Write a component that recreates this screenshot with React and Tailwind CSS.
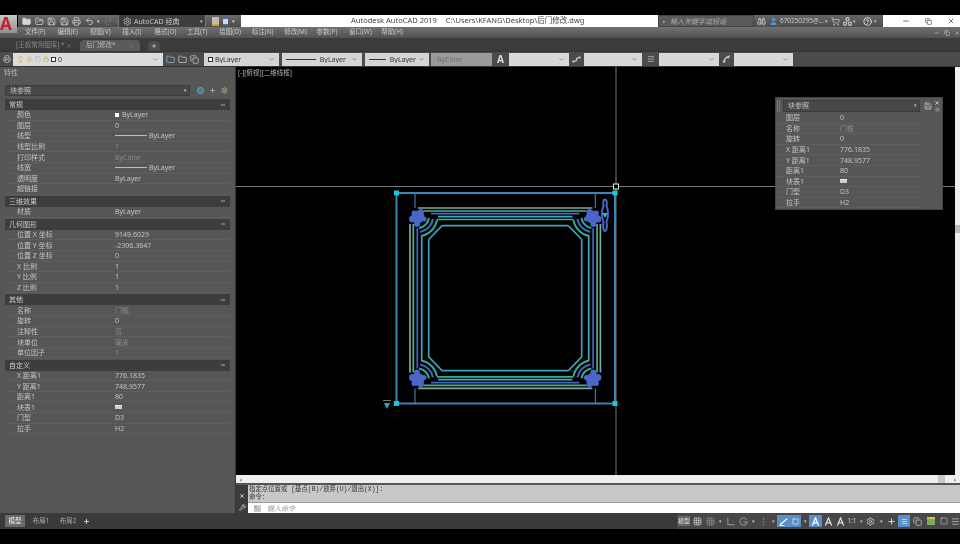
import React from 'react';
import { Folder, FolderOpen, Save, Printer, Undo2, Redo2, Settings, Lightbulb, Sun, Lock, ChevronDown, X, Minus, Square, Copy, Binoculars, User, ShoppingCart, HelpCircle, Wrench, Plus, Grid3x3, Menu } from 'lucide-react';

const menus = ['文件(F)', '编辑(E)', '视图(V)', '插入(I)', '格式(O)', '工具(T)', '绘图(D)', '标注(N)', '修改(M)', '参数(P)', '窗口(W)', '帮助(H)'];

const sections = [
  { title: '常规', rows: [['颜色', 'color'], ['图层', '0'], ['线型', 'line'], ['线型比例', '1', 1], ['打印样式', 'ByColor', 1], ['线宽', 'line'], ['透明度', 'ByLayer'], ['超链接', '']] },
  { title: '三维效果', rows: [['材质', 'ByLayer']] },
  { title: '几何图形', rows: [['位置 X 坐标', '9149.6029'], ['位置 Y 坐标', '-2306.3647'], ['位置 Z 坐标', '0'], ['X 比例', '1'], ['Y 比例', '1'], ['Z 比例', '1']] },
  { title: '其他', rows: [['名称', '门框', 1], ['旋转', '0'], ['注释性', '否', 1], ['块单位', '毫米', 1], ['单位因子', '1', 1]] },
  { title: '自定义', rows: [['X 距离1', '776.1835'], ['Y 距离1', '748.9577'], ['距离1', '80'], ['块表1', 'table'], ['门型', 'D3'], ['拉手', 'H2']] },
];

const floatRows = [['图层', '0'], ['名称', '门框', 1], ['旋转', '0'], ['X 距离1', '776.1835'], ['Y 距离1', '748.9577'], ['距离1', '80'], ['块表1', 'table'], ['门型', 'D3'], ['拉手', 'H2']];

// door frame bands: [top y, start x of the top line, colour]
const topBands = [
  [208, 418, '#7fa89f'],
  [211, 424, '#4bb08c'],
  [213.7, 431, '#4b62c4'],
  [216.7, 438, '#3fa8b8'],
  [219.5, 437, '#30b08c'],
  [225.7, 442, '#3fa0b8'],
];
// [left x, start y of the left line, colour]
const sideBands = [
  [410, 224, '#7fa89f'],
  [413.3, 224, '#4bb08c'],
  [417.3, 228, '#4b62c4'],
  [421.7, 236, '#3fa8b8'],
  [428.7, 239.5, '#3fa0b8'],
];
const frameW = 1010.4;
const frameH = 596.4;

const Value = ({ v, dim }) => {
  if (v === 'color') return <span className="flex items-center gap-[3px]"><span className="w-1 h-1 bg-white" />ByLayer</span>;
  if (v === 'line') return <span className="flex items-center gap-0.5"><span className="w-8 h-px bg-[#bbb]" />ByLayer</span>;
  if (v === 'table') return <span className="block w-[7px] h-1 bg-[#ccc] border-t border-[#eee]" />;
  return <span className={dim ? 'text-[#8c8c8c]' : ''}>{v}</span>;
};

const Combo = ({ className, children }) => (
  <div className={`flex items-center justify-between px-1 h-[13px] text-[7px] text-[#333] ${className}`}>
    <span className="flex items-center gap-0.5 truncate">{children}</span>
    <ChevronDown size={7} strokeWidth={2} className="text-[#666] shrink-0" />
  </div>
);

const Corner = () => (
  <g fill="none">
    <path d="M442 225.700L428.700 239.500" stroke="#3fa0b8" strokeWidth="1.700" />
    <path d="M429 218A12 12 0 0 1 419 228" stroke="#30b08c" strokeWidth="2" />
    <path d="M433 219A16 16 0 0 1 420 232" stroke="#4b62c4" strokeWidth="2" />
    <path d="M437 220A20 20 0 0 1 421 236" stroke="#30b08c" strokeWidth="2" />
    <path d="M415 193V208" stroke="#4a66a8" strokeWidth="1.300" />
    <g fill="#4a66c8">
      <circle cx="418" cy="217" r="6.500" />
      <circle cx="412.500" cy="219" r="3.500" />
      <circle cx="421" cy="212" r="3" />
      <circle cx="424" cy="219" r="2.500" />
      <circle cx="417" cy="224" r="3" />
      <circle cx="414" cy="213" r="2.500" />
    </g>
  </g>
);

const Grip = ({ x, y }) => <rect x={x - 2.5} y={y - 2.5} width="5" height="5" fill="#19c8e0" />;

const Drawing = () => (
  <svg viewBox="236 67 719 408" className="w-full h-full block">
    <path d="M236 186.500H955M616 67V475" stroke="#7a7a7a" strokeWidth="1" fill="none" />
    <g fill="none" strokeWidth="1.700">
      {topBands.map(([y, x, c]) => (
        <path key={y} stroke={c} d={`M${x} ${y}H${frameW - x}M${x} ${frameH - y}H${frameW - x}`} />
      ))}
      {sideBands.map(([x, y, c]) => (
        <path key={x} stroke={c} d={`M${x} ${y}V${frameH - y}M${frameW - x} ${y}V${frameH - y}`} />
      ))}
    </g>
    <Corner />
    <g transform="translate(1010.400 0) scale(-1 1)"><Corner /></g>
    <g transform="translate(0 596.400) scale(1 -1)"><Corner /></g>
    <g transform="translate(1010.400 596.400) scale(-1 -1)"><Corner /></g>
    <rect x="396.500" y="193" width="218.500" height="210.500" fill="none" stroke="#3a86b4" strokeWidth="2" />
    <Grip x={396.500} y={193} />
    <Grip x={615} y={193} />
    <Grip x={396.500} y={403.500} />
    <Grip x={615} y={403.500} />
    <rect x="613.500" y="184" width="5" height="5" fill="#000" stroke="#eee" strokeWidth="1" />
    <path d="M384 403H390L387 409Z" fill="#2fa8b0" />
    <path d="M383 400.500H391" stroke="#6a7a7a" strokeWidth="1" />
    <path d="M605 199.500C607 199.500 607 203 606.500 206C608.500 210 608.500 217 606.500 222C607.500 226 606.500 231 605 231C603.500 231 602.500 226 603.500 222C601.500 217 601.500 210 603.500 206C603 203 603 199.500 605 199.500Z" fill="none" stroke="#4a66c8" strokeWidth="2" />
    <path d="M602.500 213H607.500L605 218Z" fill="#19c8e0" />
  </svg>
);

const Bar = ({ size = 9, icon: Icon, className = '' }) => <Icon size={size} strokeWidth={2} className={`shrink-0 ${className}`} />;

// small drop marker used all over the ribbon bars
const Drop = ({ className = '' }) => <span className={`text-[5px] ${className}`}>▾</span>;

const Slot = ({ w, blue, children }) => (
  <span className={`${w} h-3 shrink-0 flex items-center justify-center ${blue ? 'bg-[#5a8fc8] text-white' : ''}`}>{children}</span>
);

const Glyph = ({ d, className = '' }) => (
  <svg viewBox="0 0 10 10" className={`w-[9px] h-[9px] ${className}`} fill="none" stroke="currentColor" strokeWidth="1.400"><path d={d} /></svg>
);

export default function App() {
  return (
    <div className="w-[960px] h-[544px] bg-black overflow-hidden text-[7px] leading-none blur-[0.4px]" style={{ fontFamily: '"Noto Sans", "Noto Sans CJK SC", sans-serif' }}>
      <div className="h-[15px]" />

      {/* title + menu */}
      <div className="relative">
        <div className="absolute left-0 top-0 w-[17px] h-[18px] bg-gradient-to-b from-[#c9c9c9] to-[#8f8f8f] z-10 flex justify-start">
          <span className="block text-[#c8202c] font-bold text-[17px] leading-[17px]">A</span>
        </div>
        <div className="h-3 flex text-[#ddd]">
          <div className="w-[17px]" />
          <div className="w-[100px] ml-px bg-gradient-to-b from-[#6c6c6c] to-[#4c4c4c] flex items-center gap-[3.500px] pl-1 text-[#d4d4d4]">
            <Bar icon={Folder} className="fill-current" />
            <Bar icon={FolderOpen} />
            <Bar icon={Save} />
            <Bar icon={Save} />
            <Bar icon={Printer} />
            <Bar icon={Undo2} />
            <Drop />
            <Bar icon={Redo2} className="text-[#777]" />
            <Drop className="text-[#777]" />
          </div>
          <div className="w-[88px] bg-[#3f3f3f] flex items-center pl-1 gap-0.5 border-x border-[#777] text-[#c8c8c8]">
            <Bar icon={Settings} />
            <span>AutoCAD 经典</span>
            <Drop className="ml-auto mr-0.5" />
          </div>
          <div className="w-[35px] bg-gradient-to-b from-[#6c6c6c] to-[#4c4c4c] flex items-center gap-1 pl-1.5 text-[#ddd]">
            <span className="w-[7px] h-[9px] bg-[#bbb] border-b-2 border-[#d9a030]" />
            <span className="w-[5px] h-[9px] bg-[#cfd8e0] border-y-2 border-[#3a70b0]" />
            <Drop />
          </div>
          <div className="w-[417px] bg-white flex items-center text-[#444] text-[7.500px] pl-[110px] gap-[9px] whitespace-nowrap">
            <span>Autodesk AutoCAD 2019</span>
            <span>C:\Users\KFANG\Desktop\后门修改.dwg</span>
          </div>
          <div className="w-[96px] bg-[#5a5a5a] border border-[#444] flex items-center text-[#aaa] italic pl-2 gap-1">
            <span className="text-[5px] not-italic -ml-1">▸</span>输入关键字或短语
          </div>
          <div className="w-[129px] bg-gradient-to-b from-[#666] to-[#4c4c4c] flex items-center pl-[3px] text-[#c8c8c8]">
            <Bar icon={Binoculars} className="mr-[3px]" />
            <Bar icon={User} className="text-[#5b8fd0] mr-0.5 fill-current" />
            <span className="whitespace-nowrap text-[6.400px]">670250295@...</span>
            <Drop className="ml-px mr-[3px]" />
            <Bar icon={ShoppingCart} className="mr-[3px]" />
            <svg viewBox="0 0 10 10" className="w-[9px] h-[9px] shrink-0" fill="none" stroke="currentColor" strokeWidth="1.300"><circle cx="5" cy="2.500" r="1.800" /><circle cx="2.200" cy="7.500" r="1.800" /><circle cx="7.800" cy="7.500" r="1.800" /></svg>
            <Drop className="ml-px mr-[7px]" />
            <Bar icon={HelpCircle} className="text-white" />
            <Drop className="ml-0.5" />
          </div>
          <div className="flex-1 bg-white flex items-center pl-[19px] gap-[15px] text-[#333]">
            <Minus size={8} />
            <Copy size={7} />
            <X size={8} />
          </div>
        </div>
        <div className="h-[11px] bg-gradient-to-b from-[#717171] to-[#515151] flex items-center text-[#c9c9c9] relative">
          <div className="w-[25px]" />
          {menus.map((m) => <span key={m} className="w-[32.400px] shrink-0 text-[6.500px]">{m}</span>)}
          <div className="ml-auto flex items-center gap-[4px] text-[#ccc]">
            <Minus size={6} /><Copy size={6} /><X size={6} />
          </div>
        </div>
      </div>

      {/* file tabs */}
      <div className="h-[13px] bg-[#3b3b3b] flex items-end pl-2 text-[6.500px] whitespace-nowrap">
        <div className="w-[72px] h-[11px] flex items-center justify-between px-2 text-[#888]"><span>[王叔常用图库] *</span><X size={6} /></div>
        <div className="w-[60px] h-[11px] bg-[#5a5a5a] rounded-t-sm flex items-center justify-between px-1.5 text-[#bbb]"><span>后门修改*</span><X size={6} className="text-[#777]" /></div>
        <div className="ml-2 w-[12px] h-[10px] bg-[#4c4c4c] rounded-t-sm flex items-center justify-center text-[#ccc]"><Plus size={6} strokeWidth={3} /></div>
      </div>

      {/* layer toolbar */}
      <div className="h-[15px] bg-[#4b4b4b] flex items-center border-t border-[#333] text-[#333]">
        <div className="w-[13px] flex justify-center text-[#ccc]"><Bar icon={Printer} size={8} /></div>
        <Combo className="w-[150px] bg-[#dcdcdc]">
          <Lightbulb size={7} className="text-[#c9a820]" />
          <Sun size={7} className="text-[#c9a820]" />
          <Square size={6} className="text-[#aaa]" />
          <Lock size={6} className="text-[#c9a820]" />
          <span className="w-[5px] h-[5px] border border-[#333] bg-white" />0
        </Combo>
        <div className="w-[41px] flex gap-[3px] pl-[3px] text-[#c8c8c8]">
          <Bar icon={Folder} className="text-[#9ab8d8]" />
          <Bar icon={Folder} />
          <Bar icon={Copy} />
        </div>
        <Combo className="w-[75px] bg-[#d4d4d4]"><span className="w-[5px] h-[5px] border border-[#333] bg-white" />ByLayer</Combo>
        <Combo className="w-[80px] ml-[3px] bg-[#d4d4d4]"><span className="w-[30px] h-px bg-[#333]" />&nbsp;ByLayer</Combo>
        <Combo className="w-[64px] ml-[3px] bg-[#d4d4d4]"><span className="w-[17px] h-px bg-[#333]" />&nbsp;ByLayer</Combo>
        <div className="w-[61px] h-[13px] ml-0.5 bg-[#9a9a9a] text-[#6e6e6e] flex items-center px-1.5">ByColor</div>
        <div className="w-[17px] text-center text-[#ddd] text-[10px] font-bold">A</div>
        <Combo className="w-[60px] bg-[#d8d8d8]" />
        <div className="w-[15px] flex justify-center text-[#ccc]"><Glyph d="M1 8L5 6L5 4L9 2M1 8V6M9 2V4" /></div>
        <Combo className="w-[58px] bg-[#d8d8d8]" />
        <div className="w-[17px] flex justify-center text-[#ccc]"><Bar icon={Menu} size={8} /></div>
        <Combo className="w-[60px] bg-[#d8d8d8]" />
        <div className="w-[15px] flex justify-center text-[#ccc]"><Glyph d="M2 9C2 5 5 2 9 1M1 7H4M7 1V4" /></div>
        <Combo className="w-[59px] bg-[#d8d8d8]" />
      </div>

      {/* main area */}
      <div className="h-[447px] flex border-t border-[#333]">
        <aside className="w-[236px] shrink-0 bg-[#565656] text-[#c4c4c4] border-r border-[#333]">
          <div className="h-[18px] flex items-start pl-1 pt-[1.500px] text-[#bbb]">特性</div>
          <div className="flex items-center h-[11px] px-[5px]">
            <div className="w-[185px] h-full bg-[#474747] border border-[#3c3c3c] flex items-center justify-between pl-1 pr-0.5">块参照<Drop /></div>
            <div className="flex-1 flex justify-around pl-1 text-[#ccc]">
              <span className="w-[7px] h-[7px] rounded-full bg-[#3d79b8] border border-[#7fb069]" />
              <Plus size={7} />
              <Settings size={7} className="text-[#d0c080]" />
            </div>
          </div>
          <div className="mt-[3px] px-[5px]">
            {sections.map((s) => (
              <section key={s.title} className="mb-[1.200px]">
                <div className="h-[11px] bg-[#3d3d3d] flex items-center justify-between pl-[4px] pr-1 text-[#ccc]">
                  <span>{s.title}</span><Minus size={6} strokeWidth={3} />
                </div>
                {s.rows.map(([k, v, dim]) => (
                  <div key={k} className="h-[10.600px] flex items-center border-b border-[#5e5e5e]">
                    <span className="w-[110px] pl-3">{k}</span>
                    <Value v={v} dim={dim} />
                  </div>
                ))}
              </section>
            ))}
          </div>
        </aside>

        <div className="flex-1 flex flex-col min-w-0">
          <div className="h-[408px] relative flex">
            <main className="flex-1 min-w-0 relative bg-black">
              <span className="absolute left-0.5 top-[3px] text-[#b5b5b5] text-[6.500px]">[-][俯视][二维线框]</span>
              <Drawing />
              <div className="absolute left-[539px] top-[30px] w-[168px] h-[113px] bg-[#565656] border border-[#444] text-[#c4c4c4] flex flex-col">
                <div className="h-[15px] flex items-center pl-px pr-0.5 shrink-0">
                  <span className="w-[3px] h-3 mr-[3px] border-x border-[#777]" />
                  <div className="w-[137px] h-3 bg-[#474747] border border-[#3c3c3c] flex items-center justify-between pl-1 pr-0.5">块参照<Drop /></div>
                  <Save size={8} className="ml-[4px] text-[#ccc]" />
                  <span className="ml-auto flex flex-col items-center gap-px text-[#ddd]">
                    <X size={6} strokeWidth={3} />
                    <Menu size={5} />
                  </span>
                </div>
                {floatRows.map(([k, v, dim]) => (
                  <div key={k} className="h-[10.600px] flex items-center shrink-0 border-b border-[#5e5e5e] mr-5">
                    <span className="w-[64px] pl-[10px]">{k}</span>
                    <Value v={v} dim={dim} />
                  </div>
                ))}
              </div>
            </main>
            <div className="w-[5px] bg-[#efefef] flex flex-col">
              <div className="mt-[158px] h-2 bg-[#bbb]" />
            </div>
          </div>
          <div className="h-[10px] bg-[#efefef] flex items-center justify-between px-1 border-b-2 border-[#555] text-[#333]">
            <span className="text-[7px]">‹</span>
            <span className="ml-auto w-[7px] h-full bg-[#c8c8c8] mr-[9px]" />
            <span className="text-[7px]">›</span>
          </div>
          <div className="flex-1 flex">
            <div className="w-[12px] bg-[#3c3c3c] flex flex-col items-center justify-end text-[#eee] gap-[5px] pb-0.5">
              <X size={6} strokeWidth={3} />
              <Wrench size={7} />
            </div>
            <div className="flex-1 flex flex-col bg-[#c8c8c8]">
              <div className="flex-1 text-[#333] text-[6.400px] leading-[8px] pl-[1px] pt-[1px]" style={{ fontFamily: '"Liberation Mono", "Noto Sans CJK SC", monospace' }}>
                <div>指定点位置或 [基点(B)/放弃(U)/退出(X)]:</div>
                <div>命令:</div>
              </div>
              <div className="h-[11px] bg-white border-t border-[#999] flex items-center gap-1.5 pl-1.5 text-[#999] italic">
                <span className="not-italic w-[7px] h-[7px] bg-[#ccc] text-[5px] text-[#444]">&gt;_</span>键入命令
              </div>
            </div>
          </div>
        </div>
      </div>

      {/* status bar */}
      <div className="h-4 bg-[#3a3a3a] flex items-center text-[#aaa] text-[6.500px]">
        <span className="ml-[5px] w-[20px] h-3 bg-[#6a6a6a] text-[#eee] flex items-center justify-center">模型</span>
        <span className="ml-[6px] w-[20px] text-center">布局1</span>
        <span className="ml-[7px] w-[20px] text-center">布局2</span>
        <span className="ml-[5px] text-[#ddd]"><Plus size={7} strokeWidth={3} /></span>
        <div className="ml-auto w-[283px] h-full flex items-center bg-[#474747] text-[#c4c4c4]">
          <Slot w="w-[14px]"><span className="bg-[#666] text-[#ddd] whitespace-nowrap text-[6px] py-[2px]">模型</span></Slot>
          <Slot w="w-[13px]"><Bar icon={Grid3x3} /></Slot>
          <Slot w="w-[12px]"><Bar icon={Grid3x3} className="text-[#888]" /></Slot>
          <Slot w="w-[8px]"><Drop /></Slot>
          <Slot w="w-[13px]"><Glyph d="M2 1V8.500H9.500" className="text-[#888]" /></Slot>
          <Slot w="w-[12px]"><Glyph d="M8.500 3A4 4 0 1 0 9 5.500H5" className="text-[#888]" /></Slot>
          <Slot w="w-[8px]"><Drop /></Slot>
          <Slot w="w-[12px]"><Glyph d="M5 1V3M5 4.500V6.500M5 8V9.500" className="text-[#888]" /></Slot>
          <Slot w="w-[8px]"><Drop /></Slot>
          <Slot w="w-[12px]" blue><Glyph d="M1 8.500L9 2M1 9.500H6" /></Slot>
          <Slot w="w-[12px]" blue><Square size={7} /></Slot>
          <Slot w="w-[8px]"><Drop /></Slot>
          <Slot w="w-[13px]" blue><Glyph d="M1.500 9.500L5 1L8.500 9.500M3 6.500H7" /></Slot>
          <Slot w="w-[12px]"><Glyph d="M1.500 9.500L5 1L8.500 9.500M3 6.500H7" className="text-[#ddd]" /></Slot>
          <Slot w="w-[12px]"><Glyph d="M1.500 9.500L5 1L8.500 9.500M3 6.500H7" className="text-[#ddd]" /></Slot>
          <Slot w="w-[12px]"><span className="text-[#ccc]">1:1</span></Slot>
          <Slot w="w-[6px]"><Drop /></Slot>
          <Slot w="w-[13px]"><Bar icon={Settings} className="text-[#ddd]" /></Slot>
          <Slot w="w-[8px]"><Drop /></Slot>
          <Slot w="w-[13px]"><Plus size={9} strokeWidth={2.500} className="text-[#ddd]" /></Slot>
          <Slot w="w-[12px]" blue><Bar icon={Menu} size={7} /></Slot>
          <Slot w="w-[14px]"><Bar icon={Copy} /></Slot>
          <Slot w="w-[14px]"><span className="w-2 h-2 bg-[#7da860] border-t-2 border-[#d9c040]" /></Slot>
          <Slot w="w-[12px]"><Square size={8} /></Slot>
          <Slot w="w-[10px]"><Bar icon={Menu} /></Slot>
        </div>
      </div>
    </div>
  );
}
